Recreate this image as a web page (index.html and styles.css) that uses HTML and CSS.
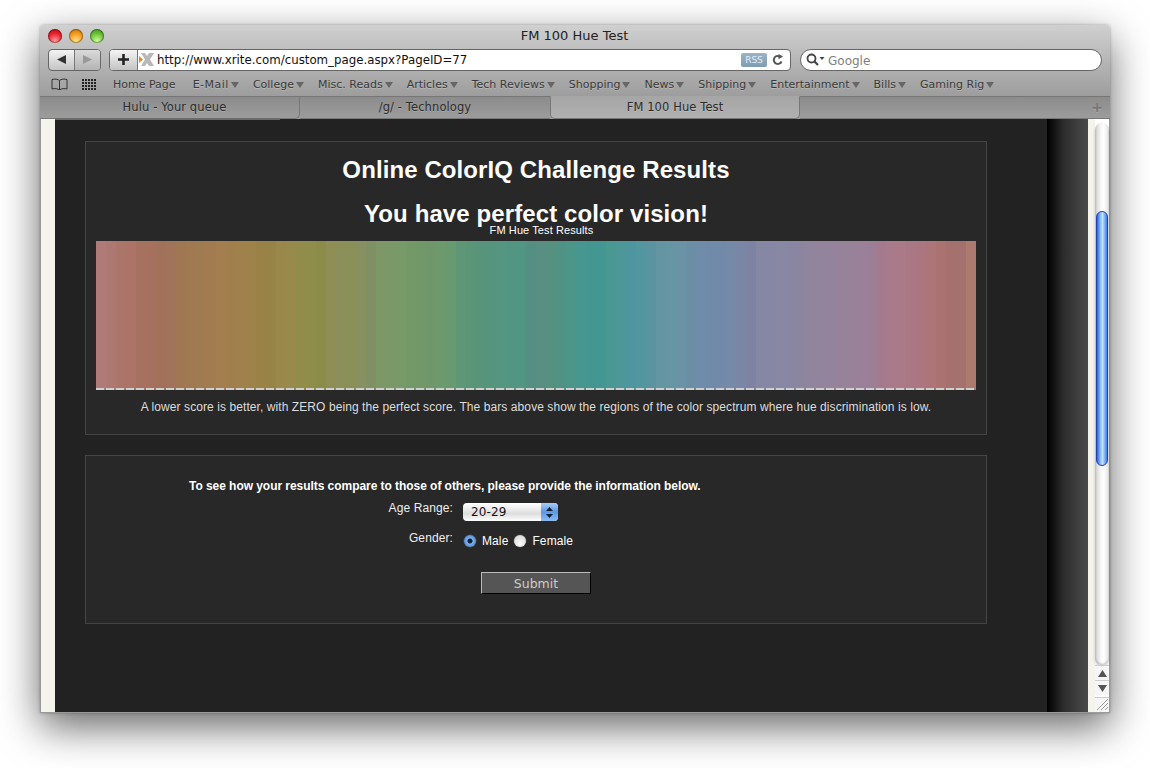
FILE: index.html
```html
<!DOCTYPE html>
<html lang="en">
<head>
<meta charset="UTF-8">
<title>FM 100 Hue Test</title>
<link rel="stylesheet" href="styles.css">
</head>
<body>
<div class="window">

<div class="chrome">
  <div class="titlebar">
    <div class="lights"><i class="light red"></i><i class="light amber"></i><i class="light green"></i></div>
    <div class="title">FM 100 Hue Test</div>
  </div>

  <div class="toolbar">
    <div class="navbtns">
      <div class="navbtn"><svg width="11" height="11" viewBox="0 0 11 11"><path d="M10 1v9L1 5.500z" fill="#333"/></svg></div>
      <div class="navbtn"><svg width="11" height="11" viewBox="0 0 11 11"><path d="M1 1v9l9-4.500z" fill="#999"/></svg></div>
    </div>
    <div class="address">
      <div class="addbtn"><svg width="11" height="11" viewBox="0 0 11 11"><path d="M4.200 0h2.600v4.200H11v2.600H6.800V11H4.200V6.800H0V4.200h4.200z" fill="#222"/></svg></div>
      <svg class="favicon" width="16" height="15" viewBox="0 0 16 15"><path d="M2 1h4l2 3 2-3h5L11 7.500 15 14h-5l-2-3-2 3H2l4-6.500z" fill="#b8b8b8"/><path d="M0 4l4 3.500L0 11z" fill="#e08a2c"/></svg>
      <div class="url">http://www.xrite.com/custom_page.aspx?PageID=77</div>
      <div class="rss">RSS</div>
      <svg class="reload" width="12" height="12" viewBox="0 0 12 12"><path d="M9.500 7.500A4 4 0 1 1 7.500 2.300" fill="none" stroke="#555" stroke-width="2"/><path d="M6.500 0l4.500 2.600-4.500 2.600z" fill="#555"/></svg>
    </div>
    <div class="search">
      <svg width="19" height="13" viewBox="0 0 19 13"><circle cx="5.500" cy="5.500" r="4" fill="none" stroke="#444" stroke-width="1.800"/><path d="M8.500 8.500l3.500 3.500" stroke="#444" stroke-width="2.200"/><path d="M13.500 4h5l-2.500 3z" fill="#444"/></svg>
      <span>Google</span>
    </div>
  </div>

  <div class="bookmarks">
    <svg class="bookicon" width="17" height="12" viewBox="0 0 17 12"><path d="M8.500 2.500C7 1 3.500.8 1 1.500V11c2.500-.7 6-.5 7.500 1 1.500-1.500 5-1.700 7.500-1V1.500C13.500.8 10 1 8.500 2.500zm0 0V12" fill="none" stroke="#333"/></svg>
    <div class="gridicon"><i></i><i></i><i></i><i></i><i></i><i></i><i></i><i></i><i></i><i></i><i></i><i></i><i></i><i></i><i></i><i></i><i></i><i></i><i></i><i></i></div>
    <div class="marks">
      <span class="home">Home Page</span>
      <span class="more email">E-Mail</span>
      <span class="more">College</span>
      <span class="more">Misc. Reads</span>
      <span class="more">Articles</span>
      <span class="more">Tech Reviews</span>
      <span class="more">Shopping</span>
      <span class="more">News</span>
      <span class="more">Shipping</span>
      <span class="more">Entertainment</span>
      <span class="more">Bills</span>
      <span class="more">Gaming Rig</span>
    </div>
  </div>

  <div class="tabs">
    <div class="tab first">Hulu - Your queue</div>
    <div class="tab">/g/ - Technology</div>
    <div class="tab active">FM 100 Hue Test</div>
    <div class="tabrest"><span class="newtab">+</span></div>
  </div>
</div>

<div class="content">
  <div class="gutter"></div>
  <div class="page">
    <div class="panel results">
      <h1>Online ColorIQ Challenge Results</h1>
      <h2>You have perfect color vision!</h2>
      <div class="caption">FM Hue Test Results</div>
      <div class="chart"></div>
      <p class="note">A lower score is better, with ZERO being the perfect score. The bars above show the regions of the color spectrum where hue discrimination is low.</p>
    </div>

    <div class="panel compare">
      <div class="intro">To see how your results compare to those of others, please provide the information below.</div>
      <div class="row age">
        <label>Age Range:</label>
        <div class="select">
          <span class="value">20-29</span>
          <span class="arrows"><svg width="7" height="11" viewBox="0 0 7 11"><path d="M3.500 0L7 4H0zM0 7h7l-3.500 4z" fill="#123"/></svg></span>
        </div>
      </div>
      <div class="row gender">
        <label>Gender:</label>
        <div class="radios">
          <i class="radio on"></i><span>Male</span>
          <i class="radio"></i><span>Female</span>
        </div>
      </div>
      <button class="submit">Submit</button>
    </div>
  </div>
  <div class="fade"></div>
  <div class="gutter narrow"></div>
  <div class="scrollbar">
    <div class="track">
      <div class="thumb"></div>
    </div>
    <div class="arrow"><svg width="9" height="7" viewBox="0 0 9 7"><path d="M4.500 0L9 7H0z" fill="#555"/></svg></div>
    <div class="arrow"><svg width="9" height="7" viewBox="0 0 9 7"><path d="M0 0h9L4.500 7z" fill="#555"/></svg></div>
    <div class="resizer"><svg width="13" height="13" viewBox="0 0 13 13"><path d="M1 12L12 1M5 12l7-7M9 12l3-3" stroke="#999" fill="none"/></svg></div>
  </div>
</div>

</div>
</body>
</html>
```

FILE: styles.css
```css
html,body{margin:0;height:100%}
body{background:#fff;padding:25px 40px 0;box-sizing:border-box;overflow:hidden;font-family:"Liberation Sans",Arial,sans-serif}

.window{height:688px;display:flex;flex-direction:column;border-radius:4px 4px 0 0;box-shadow:0 14px 40px rgba(0,0,0,.6),0 0 3px rgba(0,0,0,.3)}

/* browser chrome */
.chrome{font-family:"DejaVu Sans",sans-serif;color:#333;background:linear-gradient(#d0d0d0,#9d9d9d 71px);border-radius:4px 4px 0 0}
.titlebar{height:22px;display:flex;align-items:center;position:relative}
.lights{display:flex;gap:7px;padding-left:8px}
.light{width:14px;height:14px;border-radius:50%;box-shadow:inset 0 0 0 1px rgba(0,0,0,.35)}
.red{background:radial-gradient(circle at 50% 85%,#ff9a9a,#e8202c 55%,#a80e1a)}
.amber{background:radial-gradient(circle at 50% 85%,#ffe28a,#f59a1c 55%,#b86a0c)}
.green{background:radial-gradient(circle at 50% 85%,#d0ff9a,#68c032 55%,#3d8a1c)}
.title{position:absolute;left:0;right:0;text-align:center;font-size:13px;color:#222;line-height:22px;text-indent:-1px}

.toolbar{height:25px;display:flex;align-items:center;padding:0 8px;box-sizing:border-box}
.navbtns{display:flex;width:53px;height:22px;border:1px solid #666;border-radius:4px;box-sizing:border-box;overflow:hidden;background:linear-gradient(#f4f4f4,#c4c4c4)}
.navbtn{flex:1;display:flex;align-items:center;justify-content:center}
.navbtn+.navbtn{border-left:1px solid #777;background:linear-gradient(#dadada,#b4b4b4)}
.address{margin-left:8px;width:682px;height:22px;box-sizing:border-box;border:1px solid #666;border-radius:4px;background:#fff;display:flex;align-items:center;overflow:hidden}
.addbtn{width:27px;height:100%;display:flex;align-items:center;justify-content:center;border-right:1px solid #777;background:linear-gradient(#f4f4f4,#c4c4c4)}
.favicon{margin-left:1px;flex:none}
.url{margin-left:2px;font-size:11.800px;color:#111;flex:1;white-space:nowrap}
.rss{width:26px;height:14px;line-height:14px;text-align:center;font-size:9px;color:#e4edf4;background:linear-gradient(#9ab3c6,#7f9cb2);border-radius:2px}
.reload{margin:0 6px 0 5px}
.search{margin-left:9px;width:302px;height:22px;box-sizing:border-box;border:1px solid #666;border-radius:11px;background:#fff;display:flex;align-items:center;padding-left:5px;gap:3px;font-size:12px;color:#808080}
.search span{padding-top:2px}

.bookmarks{height:24px;display:flex;align-items:center;padding-left:11px;box-sizing:border-box;font-size:11px}
.gridicon{margin-left:14px;width:15px;display:grid;grid-template-columns:repeat(5,2px);gap:1px;flex:none}
.gridicon i{height:2px;background:#222}
.marks{margin-left:16px;display:flex;gap:14px;white-space:nowrap;color:#3a3a3a;text-shadow:0 1px 0 rgba(255,255,255,.25)}
.home{margin-right:3px}
.email{letter-spacing:.5px}
.more::after{content:"";display:inline-block;margin-left:2px;border:4px solid transparent;border-top:6px solid #666;border-bottom:0;vertical-align:0}

.tabs{height:23px;display:flex;font-size:11.500px;line-height:21px;letter-spacing:.1px;text-align:center;position:relative;color:#2c2c2c;text-shadow:0 1px 0 rgba(255,255,255,.2)}
.tab{width:250px;box-sizing:border-box;border-top:1px solid #767676;border-bottom:1px solid #777;background:linear-gradient(#8c8c8c,#9c9c9c)}
.tab.first{width:260px;padding-left:10px;border-right:1px solid #777;border-bottom-right-radius:5px}
.tab.first::after{content:"";position:absolute;left:15px;width:225px;bottom:-1px;height:2px;background:#6a6a6a}
.tab.active{background:linear-gradient(#a6a6a6,#b0b0b0);border:1px solid #777;border-top-color:#a6a6a6;border-radius:0 0 5px 5px}
.tabrest{flex:1;border-top:1px solid #767676;border-bottom:1px solid #777;background:linear-gradient(#8c8c8c,#9c9c9c);text-align:right;padding-right:7px;box-sizing:border-box}
.newtab{font-size:14px;font-weight:bold;color:#777}

/* page area */
.content{flex:1;display:flex;min-height:0;background:#f4f3ec;border:solid #999;border-width:0 1px 1px}
.gutter{width:14px;flex:none;background:#f4f3ec}
.gutter.narrow{width:7px}
.page{width:992px;box-sizing:border-box;padding:22px 60px 0 30px;background:#222;color:#fff;flex:none}
.fade{width:41px;flex:none;background:linear-gradient(90deg,#000,#2c2c2c 40%,#4b4b4b)}

.panel{background:#282828;border:1px solid #444;box-sizing:border-box;width:902px;text-align:center}
.results{height:294px;padding:14px 10px 0}
.results h1,.results h2{margin:0;font-size:24px;line-height:28px;font-weight:bold;letter-spacing:.1px}
.results h2{margin-top:16px}
.caption{font-size:11px;line-height:12px;margin-top:-4px;padding-left:11px;letter-spacing:.1px}
.chart{height:149px;margin-top:5px;width:880px;position:relative;background:linear-gradient(90deg,
#b07a78 0 10px,#ae7872 10px 20px,#ac7569 20px 30px,#ab7467 30px 40px,#a67160 40px 50px,#a5705d 50px 60px,#a2715a 60px 70px,#a0735a 70px 80px,
#a07653 80px 90px,#a07952 90px 100px,#a07b52 100px 110px,#a27c50 110px 120px,#a47e4f 120px 130px,#a07f4c 130px 140px,#a0804b 140px 150px,#9e8249 150px 160px,
#9a8247 160px 170px,#978345 170px 180px,#9a884b 180px 190px,#978a4a 190px 200px,#918c4a 200px 210px,#8e8d49 210px 220px,#8b8c47 220px 230px,#8f8e56 230px 240px,
#8d8f5a 240px 250px,#8a9058 250px 260px,#869060 260px 270px,#7f9064 270px 280px,#7d9767 280px 290px,#7a9868 290px 300px,#789968 300px 310px,#749968 310px 320px,
#72986a 320px 330px,#6f976a 330px 340px,#6d9a6c 340px 350px,#679a6f 350px 360px,#5f9676 360px 370px,#5a9578 370px 380px,#589479 380px 390px,#55957d 390px 400px,
#549680 400px 410px,#529682 410px 420px,#519683 420px 430px,#538f82 430px 440px,#598f82 440px 450px,#56917f 450px 460px,#509384 460px 470px,#4b9589 470px 480px,
#479790 480px 490px,#439790 490px 500px,#449692 500px 510px,#4a9892 510px 520px,#4d9798 520px 530px,#4f95a0 530px 540px,#5296a0 540px 550px,#5a94a0 550px 560px,
#6396a2 560px 570px,#6695a4 570px 580px,#6a93a6 580px 590px,#6a8ea3 590px 600px,#6f8daa 600px 610px,#708baa 610px 620px,#7389a9 620px 630px,#7589a8 630px 640px,
#7a86a6 640px 650px,#7f83a3 650px 660px,#8587a5 660px 670px,#8687a5 670px 680px,#8887a4 680px 690px,#8986a3 690px 700px,#8c85a0 700px 710px,#90859d 710px 720px,
#92849c 720px 730px,#93839c 730px 740px,#968299 740px 750px,#98829a 750px 760px,#9a8098 760px 770px,#9b7f96 770px 780px,#a47a8f 780px 790px,#a97b8a 790px 800px,
#aa7a88 800px 810px,#aa7884 810px 820px,#ac7680 820px 830px,#ad7577 830px 840px,#aa7370 840px 850px,#a5716e 850px 860px,#a5716e 860px 870px,#ac7a6f 870px 880px)}
.chart::after{content:"";position:absolute;left:0;right:0;bottom:0;height:2px;background:repeating-linear-gradient(90deg,#d0d0d0 0 8px,transparent 8px 10px)}
.note{margin:10px 0 0;font-size:12px;line-height:14px;color:#ddd;white-space:nowrap;letter-spacing:.08px}

.compare{height:169px;margin-top:20px;font-size:12px}
.intro{font-weight:bold;text-align:left;padding:23px 0 0 103px;line-height:14px;letter-spacing:-.05px}
.row{display:flex;align-items:flex-start;letter-spacing:.1px}
.row label{width:367px;text-align:right;line-height:14px;color:#eee}
.age{margin-top:6px;height:30px}
.age label{padding-top:2px}
.select{margin:4px 0 0 10px;width:95px;height:18px;border-radius:4px;background:linear-gradient(#fff,#ddd 60%,#fff);display:flex;color:#111;font-family:"DejaVu Sans",sans-serif;font-size:12px;line-height:18px;overflow:hidden}
.value{flex:1;padding-left:8px;text-align:left}
.arrows{width:17px;display:flex;align-items:center;justify-content:center;background:linear-gradient(#a9cdf5,#5b97e6 50%,#8bbcf2)}
.gender{height:43px}
.gender label{padding-top:2px}
.radios{margin-left:11px;display:flex;align-items:center;height:17px;margin-top:3px}
.radios span{margin-left:6px;margin-right:6px}
.radio{width:12px;height:12px;border-radius:50%;background:radial-gradient(circle at 50% 70%,#fff,#ccc);box-shadow:0 0 0 .5px #555}
.radio.on{background:radial-gradient(circle,#123 0 2px,#7db0ef 3px,#3a70c8)}
.submit{display:block;margin-left:395px;width:110px;height:22px;padding:0;background:#555;border:1px solid;border-color:#bbb #000 #000 #bbb;color:#ccc;font-family:"DejaVu Sans",sans-serif;font-size:12.500px}

/* scrollbar */
.scrollbar{width:14px;flex:none;display:flex;flex-direction:column;background:#fff}
.track{flex:1;margin-top:4px;border-radius:8px 8px;background:linear-gradient(90deg,#ccc,#f6f6f6 40%,#fff 60%,#e4e4e4);box-shadow:0 2px 3px rgba(0,0,0,.2),inset 0 -1px 2px rgba(0,0,0,.25);padding-top:88px}
.thumb{height:255px;margin:0 1px;border-radius:7px;box-sizing:border-box;border:1px solid #2340b0;background:linear-gradient(90deg,#2a60d8,#8cc0f8 35%,#c4e0ff 55%,#3a80ea)}
.arrow{height:14px;display:flex;align-items:center;justify-content:center;border-top:1px solid #ccc;background:#f6f6f6}
.resizer{height:14px;display:flex;justify-content:flex-end;border-top:1px solid #ccc;background:#f6f6f6;margin-top:2px}
```
